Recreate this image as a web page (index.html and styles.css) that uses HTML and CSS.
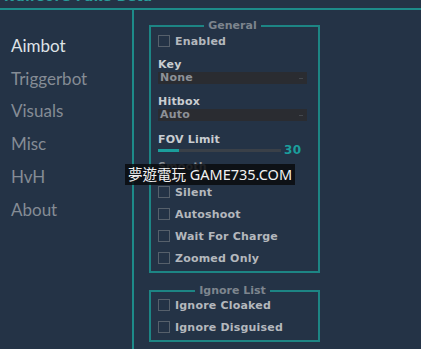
FILE: index.html
```html
<!DOCTYPE html>
<html>
<head>
<meta charset="utf-8">
<link rel="stylesheet" href="styles.css">
</head>
<body>
<header class="titlebar"><span class="title">NullCore Fake Beta</span></header>
<div class="main">
  <nav class="sidebar">
    <div class="nav-item active">Aimbot</div>
    <div class="nav-item">Triggerbot</div>
    <div class="nav-item">Visuals</div>
    <div class="nav-item">Misc</div>
    <div class="nav-item">HvH</div>
    <div class="nav-item">About</div>
  </nav>
  <section class="content">
    <fieldset class="group general">
      <legend>General</legend>
      <label class="check first"><span class="box"></span>Enabled</label>
      <div class="field-label key">Key</div>
      <div class="select"><span>None</span><span class="arrow"></span></div>
      <div class="field-label next">Hitbox</div>
      <div class="select"><span>Auto</span><span class="arrow"></span></div>
      <div class="field-label fov">FOV Limit</div>
      <div class="slider"><div class="track"><div class="fill" style="width:17%"></div></div><span class="value">30</span></div>
      <div class="field-label smooth">Smooth</div>
      <div class="slider"><div class="track"><div class="fill" style="width:0%"></div></div><span class="value"></span></div>
      <label class="check"><span class="box"></span>Silent</label>
      <label class="check"><span class="box"></span>Autoshoot</label>
      <label class="check"><span class="box"></span>Wait For Charge</label>
      <label class="check"><span class="box"></span>Zoomed Only</label>
    </fieldset>
    <fieldset class="group ignore">
      <legend>Ignore List</legend>
      <div class="ignore-rows">
        <label class="check"><span class="box"></span>Ignore Cloaked</label>
        <label class="check"><span class="box"></span>Ignore Disguised</label>
      </div>
    </fieldset>
  </section>
</div>
<div class="watermark">夢遊電玩 GAME735.COM</div>
</body>
</html>
```
FILE: styles.css
```css
html, body {
  margin: 0;
  padding: 0;
  width: 421px;
  height: 349px;
  overflow: hidden;
  background: #243346;
}
body {
  position: relative;
  font-family: "DejaVu Sans", sans-serif;
}
.titlebar {
  height: 8px;
  border-bottom: 2px solid #1d8b89;
  overflow: hidden;
  position: relative;
}
.title {
  display: block;
  margin-top: -10px;
  padding-left: 4px;
  font-family: "DejaVu Sans", sans-serif;
  font-weight: bold;
  font-size: 13px;
  line-height: 14px;
  color: #2a9d9a;
  letter-spacing: 0.5px;
}
.main {
  display: flex;
  height: 339px;
}
.sidebar {
  width: 132px;
  border-right: 2px solid #1d8b89;
  padding-top: 20px;
  box-sizing: content-box;
}
.nav-item {
  font-family: "Lato", sans-serif;
  font-size: 17px;
  line-height: 32.7px;
  padding-left: 11px;
  color: #858c95;
}
.nav-item.active {
  color: #dfe3e6;
}
.content {
  padding-left: 15px;
  padding-top: 9px;
}
.group {
  margin: 0;
  width: 171px;
  box-sizing: border-box;
  border: 2px solid #1d8584;
  padding: 0 11px 2px 7px;
  min-width: 0;
}
legend {
  margin: 0 auto;
  padding: 0 4px;
  font-size: 11px;
  font-weight: bold;
  line-height: 13px;
  color: #7d858e;
}
.check {
  display: flex;
  align-items: center;
  height: 22px;
  font-size: 11px;
  font-weight: bold;
  color: #b4b8bd;
  letter-spacing: 0.2px;
}
.check.first {
  height: 18px;
}
.box {
  width: 10px;
  height: 10px;
  border: 1px solid #56606b;
  margin-right: 5px;
  flex: none;
}
.field-label {
  font-size: 11px;
  font-weight: bold;
  line-height: 13px;
  height: 13px;
  color: #c9cdd1;
  letter-spacing: 0.2px;
}
.field-label.key { margin-top: 8px; }
.field-label.next { margin-top: 11px; }
.field-label.fov { margin-top: 12px; }
.field-label.smooth { margin-top: 6px; color: #8b9198; }
.select {
  margin-top: 1px;
  height: 12px;
  background: #2a2c31;
  display: flex;
  align-items: center;
  justify-content: space-between;
  padding: 0 4px 0 2px;
  font-size: 11px;
  font-weight: bold;
  line-height: 12px;
  color: #8d9198;
  letter-spacing: 0.2px;
}
.arrow {
  width: 4px;
  height: 1px;
  background: #44484e;
}
.slider {
  height: 8px;
  display: flex;
  align-items: center;
}
.track {
  width: 123px;
  height: 3px;
  background: #3a4048;
}
.fill {
  height: 100%;
  background: #1b9e9c;
}
.value {
  margin-left: 3px;
  font-size: 12px;
  font-weight: bold;
  line-height: 8px;
  color: #1b9e9c;
  letter-spacing: 0.5px;
}
.ignore {
  margin-top: 11px;
}
.ignore-rows {
  margin-top: -3px;
}
.watermark {
  position: absolute;
  left: 125px;
  top: 164px;
  width: 170px;
  height: 21px;
  background: rgba(8, 10, 12, 0.82);
  color: #f2f2f2;
  font-family: "Noto Sans", "Noto Sans CJK TC", sans-serif;
  font-size: 14.5px;
  line-height: 21px;
  text-align: center;
  white-space: nowrap;
}
```
